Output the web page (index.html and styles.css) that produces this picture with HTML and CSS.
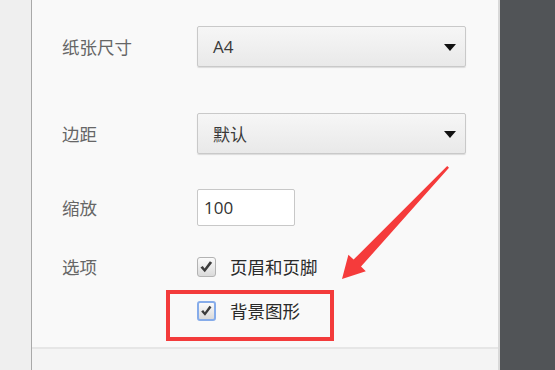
FILE: index.html
```html
<!DOCTYPE html>
<html lang="zh">
<head>
<meta charset="utf-8">
<link rel="stylesheet" href="styles.css">
</head>
<body>
<div class="screen">
  <div class="side-left"></div>
  <div class="panel">
    <div class="body">
      <div class="row row-paper">
        <div class="label">纸张尺寸</div>
        <div class="select"><span class="value latin">A4</span><span class="caret"></span></div>
      </div>
      <div class="row row-margin">
        <div class="label">边距</div>
        <div class="select"><span class="value">默认</span><span class="caret"></span></div>
      </div>
      <div class="row row-scale">
        <div class="label">缩放</div>
        <div class="input latin">100</div>
      </div>
      <div class="row row-options">
        <div class="label">选项</div>
        <div class="options">
          <div class="option">
            <span class="checkbox"><svg viewBox="0 0 18 18" width="18" height="18"><path d="M2.6 9.6 L5 7.9 L7 10.6 L12.6 2.8 L15 4.4 L7.2 14.6 Z" fill="#3c3c3c"/></svg></span>
            <span class="opt-text">页眉和页脚</span>
          </div>
          <div class="option option-focus">
            <span class="checkbox focus"><svg viewBox="0 0 18 18" width="18" height="18"><path d="M2.6 9.6 L5 7.9 L7 10.6 L12.6 2.8 L15 4.4 L7.2 14.6 Z" fill="#3c3c3c"/></svg></span>
            <span class="opt-text">背景图形</span>
            <span class="highlight"></span>
          </div>
        </div>
      </div>
    </div>
    <div class="footer"></div>
  </div>
  <div class="side-right"></div>
  <svg class="arrow" width="555" height="370" viewBox="0 0 555 370">
    <polygon points="342,279 348.4,254.8 353.6,259.6 447.2,166 449,167.8 361,266.6 365.8,271.2" fill="#f53b3b"/>
  </svg>
</div>
</body>
</html>
```

FILE: styles.css
```css
* { box-sizing: border-box; }
html, body { margin: 0; padding: 0; }
body {
  width: 555px;
  height: 370px;
  overflow: hidden;
  font-family: "Noto Sans CJK SC", "Noto Sans", sans-serif;
}
.screen {
  position: relative;
  display: flex;
  width: 555px;
  height: 370px;
}
.side-left {
  width: 32px;
  background: #efefef;
  border-right: 1px solid #a9a9a9;
}
.panel {
  width: 468px;
  background: #f9f9f9;
  border-right: 2px solid #d9d9d9;
  display: flex;
  flex-direction: column;
}
.side-right {
  flex: 1;
  background: #515457;
}
.body {
  height: 347px;
  padding-left: 30px;
}
.footer {
  flex: 1;
  border-top: 2px solid #e6e6e6;
  background: #f4f4f4;
}
.row {
  display: flex;
  align-items: center;
}
.label {
  width: 135px;
  font-size: 17.5px;
  color: #666;
  line-height: 20px;
}
.row-paper { margin-top: 26px; height: 41px; }
.row-margin { margin-top: 46px; height: 41px; }
.row-scale { margin-top: 35px; height: 37px; }
.row-options { margin-top: 31px; align-items: flex-start; }
.latin { font-family: "Open Sans", "Noto Sans", sans-serif; }
.select {
  width: 269px;
  height: 41px;
  border: 1px solid #c9c9c9;
  border-radius: 2px;
  background: linear-gradient(#f6f6f6, #e9e9e9);
  box-shadow: 0 1px 1px rgba(0,0,0,0.12);
  display: flex;
  align-items: center;
  justify-content: space-between;
  padding: 0 9px 0 15px;
  font-size: 17px;
  color: #3a3a3a;
}
.caret {
  width: 0;
  height: 0;
  border-left: 6px solid transparent;
  border-right: 6px solid transparent;
  border-top: 7px solid #111;
  margin-top: 1px;
}
.input {
  width: 98px;
  height: 37px;
  border: 1px solid #c8c8c8;
  border-radius: 2px;
  background: #fff;
  padding-left: 6px;
  display: flex;
  align-items: center;
  font-size: 17px;
  color: #333;
}
.options {
  display: flex;
  flex-direction: column;
  gap: 24px;
}
.option {
  position: relative;
  display: flex;
  align-items: center;
  height: 20px;
}
.checkbox {
  width: 19px;
  height: 20px;
  border: 1px solid #b3b3b3;
  border-radius: 3px;
  background: linear-gradient(#fbfbfb, #dadada);
  display: flex;
  align-items: center;
  justify-content: center;
}
.checkbox svg { display: block; }
.checkbox.focus {
  border: 2px solid #86acea;
}
.opt-text {
  margin-left: 14px;
  font-size: 17.5px;
  color: #2a2a2a;
  line-height: 20px;
}
.highlight {
  position: absolute;
  left: -31px;
  top: -11px;
  width: 168px;
  height: 51px;
  border: 4px solid #f33b3b;
}
.arrow {
  position: absolute;
  left: 0;
  top: 0;
  pointer-events: none;
}
```
